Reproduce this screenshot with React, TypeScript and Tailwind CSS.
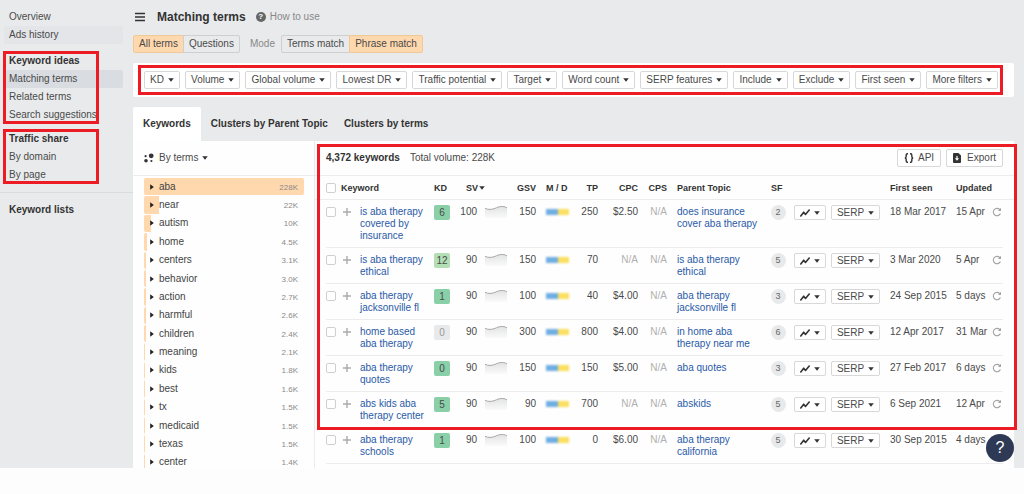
import clsx from "clsx";

const filters = [
  "KD",
  "Volume",
  "Global volume",
  "Lowest DR",
  "Traffic potential",
  "Target",
  "Word count",
  "SERP features",
  "Include",
  "Exclude",
  "First seen",
  "More filters",
];

const terms = [
  { name: "aba", label: "228K", volume: 228 },
  { name: "near", label: "22K", volume: 22 },
  { name: "autism", label: "10K", volume: 10 },
  { name: "home", label: "4.5K", volume: 4.5 },
  { name: "centers", label: "3.1K", volume: 3.1 },
  { name: "behavior", label: "3.0K", volume: 3 },
  { name: "action", label: "2.7K", volume: 2.7 },
  { name: "harmful", label: "2.6K", volume: 2.6 },
  { name: "children", label: "2.4K", volume: 2.4 },
  { name: "meaning", label: "2.1K", volume: 2.1 },
  { name: "kids", label: "1.8K", volume: 1.8 },
  { name: "best", label: "1.6K", volume: 1.6 },
  { name: "tx", label: "1.5K", volume: 1.5 },
  { name: "medicaid", label: "1.5K", volume: 1.5 },
  { name: "texas", label: "1.5K", volume: 1.5 },
  { name: "center", label: "1.4K", volume: 1.4 },
];

const keywords = [
  { keyword: "is aba therapy covered by insurance", kd: 6, level: "easy", sv: 100, gsv: 150, tp: 250, cpc: "$2.50", parent: "does insurance cover aba therapy", sf: 2, seen: "18 Mar 2017", updated: "15 Apr" },
  { keyword: "is aba therapy ethical", kd: 12, level: "medium", sv: 90, gsv: 150, tp: 70, cpc: "N/A", parent: "is aba therapy ethical", sf: 5, seen: "3 Mar 2020", updated: "5 Apr" },
  { keyword: "aba therapy jacksonville fl", kd: 1, level: "easy", sv: 90, gsv: 100, tp: 40, cpc: "$4.00", parent: "aba therapy jacksonville fl", sf: 3, seen: "24 Sep 2015", updated: "5 days" },
  { keyword: "home based aba therapy", kd: 0, level: "none", sv: 90, gsv: 300, tp: 800, cpc: "$4.00", parent: "in home aba therapy near me", sf: 6, seen: "12 Apr 2017", updated: "31 Mar" },
  { keyword: "aba therapy quotes", kd: 0, level: "easy", sv: 90, gsv: 150, tp: 150, cpc: "$5.00", parent: "aba quotes", sf: 3, seen: "27 Feb 2017", updated: "6 days" },
  { keyword: "abs kids aba therapy center", kd: 5, level: "easy", sv: 90, gsv: 90, tp: 700, cpc: "N/A", parent: "abskids", sf: 5, seen: "6 Sep 2021", updated: "12 Apr" },
  { keyword: "aba therapy schools", kd: 1, level: "easy", sv: 90, gsv: 100, tp: 0, cpc: "$6.00", parent: "aba therapy california", sf: 5, seen: "30 Sep 2015", updated: "4 days" },
];

const Caret = () => (
  <svg viewBox="0 0 6 4" className="h-1 w-1.5 shrink-0" fill="#333" aria-hidden="true">
    <path d="M0.2 0.2h5.6L3 3.8z" />
  </svg>
);

const TrendIcon = () => (
  <svg viewBox="0 0 10 8" className="h-2 w-2.5" fill="none" stroke="#333" strokeWidth="1.6" aria-hidden="true">
    <path d="M0.8 6.9L3.7 3.2L5.5 5.4L9.2 1" strokeLinejoin="round" strokeLinecap="round" />
  </svg>
);

const RefreshIcon = () => (
  <svg viewBox="0 0 10 10" className="h-2.5 w-2.5" fill="none" stroke="#a3a3a3" strokeWidth="1.1" aria-hidden="true">
    <path d="M8.4 6.6A3.7 3.7 0 1 1 7.7 2.5" />
    <path d="M9 0.8v3.1H5.9z" fill="#a3a3a3" stroke="none" />
  </svg>
);

const Sparkline = () => (
  <svg viewBox="0 0 22 14" className="h-3.5 w-[22px]" aria-hidden="true">
    <defs>
      <linearGradient id="spark" x1="0" y1="0" x2="0" y2="1">
        <stop offset="0" stopColor="#e2e3e4" />
        <stop offset="1" stopColor="#fafafa" />
      </linearGradient>
    </defs>
    <path d="M0 3.2C3 5 7 4.6 10 3.4C14 1.4 18 0.6 22 2.8V13H0z" fill="url(#spark)" />
    <path d="M0 3.2C3 5 7 4.6 10 3.4C14 1.4 18 0.6 22 2.8" fill="none" stroke="#a8a8a8" />
  </svg>
);

const Highlight = ({ className }: { className: string }) => (
  <div className={clsx("pointer-events-none absolute z-10 border-3 border-[#ed1c24]", className)} />
);

const SideLink = ({ label, active }: { label: string; active?: "soft" | "strong" }) => (
  <a
    href="#"
    className={clsx(
      "mr-2.5 ml-1 flex h-[18px] items-center rounded-xs px-[5px]",
      active === "soft" && "bg-[#e3e5e8]",
      active === "strong" && "bg-[#d9dce1]"
    )}
  >
    {label}
  </a>
);

const Sidebar = () => (
  <nav className="w-[133px] shrink-0 pt-2 whitespace-nowrap">
    <SideLink label="Overview" />
    <SideLink label="Ads history" active="soft" />
    <section className="relative mt-2">
      <Highlight className="-top-px right-[34px] bottom-0 left-[3px]" />
      <h2 className="flex h-[18px] items-center pl-[9px] font-bold text-[#333]">Keyword ideas</h2>
      <SideLink label="Matching terms" active="strong" />
      <SideLink label="Related terms" />
      <SideLink label="Search suggestions" />
    </section>
    <section className="relative mt-1.5">
      <Highlight className="-top-px right-[34px] bottom-0 left-[3px]" />
      <h2 className="flex h-[18px] items-center pl-[9px] font-bold text-[#333]">Traffic share</h2>
      <SideLink label="By domain" />
      <SideLink label="By page" />
    </section>
    <section className="mt-2 border-t border-[#d9dbde] pt-2">
      <h2 className="flex h-[18px] items-center pl-[9px] font-bold text-[#333]">Keyword lists</h2>
    </section>
  </nav>
);

const Segmented = ({ items, active }: { items: string[]; active: string }) => (
  <div className="flex h-[18px]">
    {items.map((item) => (
      <button
        key={item}
        className={clsx(
          "-ml-px border px-[5px] first:ml-0 first:rounded-l-xs last:rounded-r-xs",
          item === active ? "border-[#f0c998] bg-[#ffd8ae]" : "border-[#cdcfd2]"
        )}
      >
        {item}
      </button>
    ))}
  </div>
);

const TermsPanel = () => (
  <aside className="flex w-[182px] shrink-0 flex-col overflow-hidden border-r border-[#ececec]">
    <button className="flex h-[34px] shrink-0 items-center gap-1 pl-[11px]">
      <svg viewBox="0 0 10 10" className="h-2.5 w-2.5" fill="#333" aria-hidden="true">
        <circle cx="7.2" cy="2.8" r="2.4" />
        <circle cx="1.6" cy="3.2" r="1.1" />
        <circle cx="2" cy="7.8" r="1.8" />
        <circle cx="7.4" cy="8" r="1.1" />
      </svg>
      <span className="ml-px">By terms</span>
      <Caret />
    </button>
    <ul className="-mb-1 flex grow flex-col border-t border-[#ececec] pt-0.5 pr-2.5 pl-[11px]">
      {terms.map((term) => (
        <li key={term.name} className="flex-1 pb-px">
          <a href="#" className="relative flex h-full items-center overflow-hidden rounded-xs pr-1.5 pl-1.5">
            <span
              className="absolute inset-y-0 left-0 bg-[#ffd8ae]"
              style={{ width: `${(term.volume / 228) * 100}%` }}
            />
            <svg viewBox="0 0 4 6" className="relative h-1.5 w-1" fill="#222" aria-hidden="true">
              <path d="M0.2 0.2v5.6L3.8 3z" />
            </svg>
            <span className="relative ml-[5px] grow text-[#444]">{term.name}</span>
            <span className="relative pt-0.5 text-[8px] text-[#8a8a8a]">{term.label}</span>
          </a>
        </li>
      ))}
    </ul>
  </aside>
);

const tick =
  "block h-2.5 w-2.5 appearance-none rounded-[2px] border border-[#cfcfcf] bg-white checked:bg-[#2d5fae]";
const outlined = "flex items-center justify-center rounded-xs border border-[#d8d8d8] bg-white";
const cell = "border-b border-[#ececec] pt-1.5 pb-[5px]";
const tall = "border-b border-[#ececec] pt-[5px]";

const KeywordTable = () => (
  <table className="w-full table-fixed whitespace-nowrap">
    <colgroup>
      <col className="w-[11px]" />
      <col className="w-[15px]" />
      <col className="w-[19px]" />
      <col className="w-[74px]" />
      <col className="w-[18px]" />
      <col className="w-[25px]" />
      <col className="w-8" />
      <col className="w-[27px]" />
      <col className="w-[35px]" />
      <col className="w-[27px]" />
      <col className="w-10" />
      <col className="w-[29px]" />
      <col />
      <col className="w-[18px]" />
      <col className="w-[39px]" />
      <col className="w-[54px]" />
      <col className="w-[66px]" />
      <col className="w-[46px]" />
      <col className="w-[11px]" />
      <col className="w-[11px]" />
    </colgroup>
    <thead>
      <tr className="h-6 border-y border-[#ececec] text-left text-[9px] text-[#333]">
        <th />
        <th>
          <input type="checkbox" aria-label="Select all keywords" className={tick} />
        </th>
        <th colSpan={2}>Keyword</th>
        <th>KD</th>
        <th colSpan={2} className="pl-3.5">
          <span className="flex items-center gap-px">
            SV
            <Caret />
          </span>
        </th>
        <th className="text-right">GSV</th>
        <th className="pl-2.5">M / D</th>
        <th className="text-right">TP</th>
        <th className="text-right">CPC</th>
        <th className="text-right">CPS</th>
        <th className="pl-2.5">Parent Topic</th>
        <th className="pl-0.5">SF</th>
        <th colSpan={2} />
        <th className="pl-2.5">First seen</th>
        <th className="pl-2.5">Updated</th>
        <th colSpan={2} />
      </tr>
    </thead>
    <tbody className="align-top">
      {keywords.map((row) => (
        <tr key={row.keyword}>
          <td />
          <td className={cell}>
            <input type="checkbox" aria-label={row.keyword} className={clsx(tick, "mt-px")} />
          </td>
          <td className={cell}>
            <button aria-label="Add to list" className="mt-px ml-0.5 block">
              <svg viewBox="0 0 8 10" className="h-2.5 w-2" stroke="#aaa" strokeWidth="1.4" aria-hidden="true">
                <path d="M4 1v8M0 5h8" />
              </svg>
            </button>
          </td>
          <td className={clsx(cell, "pr-1 whitespace-normal")}>
            <a href="#" className="text-[#2a5aa7]">{row.keyword}</a>
          </td>
          <td className={tall}>
            <span
              className={clsx(
                "block w-4 rounded-[2px] text-center leading-[15px]",
                row.level === "easy" && "bg-[#89d0a8]",
                row.level === "medium" && "bg-[#b3dfb4]",
                row.level === "none" && "bg-[#e8e9ea] text-[#999]"
              )}
            >
              {row.kd}
            </span>
          </td>
          <td className={clsx(cell, "text-right")}>{row.sv}</td>
          <td className={clsx(tall, "pl-2")}>
            <Sparkline />
          </td>
          <td className={clsx(cell, "text-right")}>{row.gsv}</td>
          <td className={clsx(cell, "pl-2.5")}>
            <div className="mt-[3px] flex h-1.5 w-[23px] blur-[1px]">
              <span className="w-1/2 bg-[#6fade2]" />
              <span className="w-1/2 bg-[#fbdf5e]" />
            </div>
          </td>
          <td className={clsx(cell, "text-right")}>{row.tp}</td>
          <td className={clsx(cell, "text-right", row.cpc === "N/A" && "text-[#b0b0b0]")}>{row.cpc}</td>
          <td className={clsx(cell, "text-right text-[#b0b0b0]")}>N/A</td>
          <td className={clsx(cell, "pr-2 pl-2.5 whitespace-normal")}>
            <a href="#" className="text-[#2a5aa7]">{row.parent}</a>
          </td>
          <td className={tall}>
            <span className="mx-auto block w-[15px] rounded-full bg-[#e8e9ea] text-center text-[9px] leading-[15px] text-[#666]">
              {row.sf}
            </span>
          </td>
          <td className={clsx(tall, "pl-[7px]")}>
            <button aria-label="Trend" className={clsx(outlined, "h-[15px] w-8 gap-1")}>
              <TrendIcon />
              <Caret />
            </button>
          </td>
          <td className={clsx(tall, "pl-[5px]")}>
            <button className={clsx(outlined, "h-[15px] w-[49px] gap-1")}>
              SERP
              <Caret />
            </button>
          </td>
          <td className={clsx(cell, "pl-2.5")}>{row.seen}</td>
          <td className={clsx(cell, "pl-2.5")}>{row.updated}</td>
          <td className={cell}>
            <button aria-label="Refresh" className="mt-px block">
              <RefreshIcon />
            </button>
          </td>
          <td />
        </tr>
      ))}
    </tbody>
  </table>
);

const App = () => {
  return (
    <div className="min-h-screen bg-[#fdfdfd] font-['Liberation_Sans',Arial,sans-serif] text-[10px] leading-3 text-[#4a4a4a]">
      <div className="relative flex bg-[#e9eaec]">
        <Sidebar />
        <main className="min-w-0 grow pr-2.5">
          <header className="flex h-[33px] items-center">
            <button aria-label="Menu" className="ml-0.5">
              <svg viewBox="0 0 10 10" className="h-2.5 w-2.5" stroke="#333" strokeWidth="1.4" aria-hidden="true">
                <path d="M0 1.5h10M0 5h10M0 8.5h10" />
              </svg>
            </button>
            <h1 className="ml-3 text-xs font-bold text-[#333]">Matching terms</h1>
            <a href="#" className="ml-2.5 flex items-center gap-1 text-[#888]">
              <span className="flex h-2.5 w-2.5 items-center justify-center rounded-full bg-[#666] text-[8px] font-bold text-white">
                ?
              </span>
              How to use
            </a>
          </header>

          <div className="mt-0.5 flex items-center">
            <Segmented items={["All terms", "Questions"]} active="All terms" />
            <span className="mr-1.5 ml-2.5 text-[#888]">Mode</span>
            <Segmented items={["Terms match", "Phrase match"]} active="Phrase match" />
          </div>

          <div className="relative mt-2.5 flex gap-[5px] rounded-xs bg-white py-2 pr-4 pl-[11px] whitespace-nowrap">
            <Highlight className="inset-y-0.5 right-[11px] left-[5px]" />
            {filters.map((filter) => (
              <button key={filter} className={clsx(outlined, "h-[18px] flex-auto gap-1")}>
                {filter}
                <Caret />
              </button>
            ))}
          </div>

          <div role="tablist" className="mt-2.5 flex h-[34px] font-bold text-[#333]">
            <button role="tab" aria-selected="true" className="mr-0.5 rounded-t-xs bg-white px-2.5">
              Keywords
            </button>
            <button role="tab" className="px-2">
              Clusters by Parent Topic
            </button>
            <button role="tab" className="px-2">
              Clusters by terms
            </button>
          </div>

          <div className="flex bg-[#fefefe]">
            <TermsPanel />
            <section className="relative min-w-0 grow pb-1">
              <Highlight className="top-[3px] -right-[3px] bottom-[38px] left-0.5" />
              <div className="flex h-[34px] items-center pr-[11px] pl-[11px]">
                <strong className="text-[#333]">4,372 keywords</strong>
                <span className="ml-2.5 grow">Total volume: 228K</span>
                <button className={clsx(outlined, "mr-[5px] h-[18px] gap-1 px-1.5")}>
                  <svg viewBox="0 0 10 10" className="h-2.5 w-2.5" fill="none" stroke="#333" strokeWidth="1.4" aria-hidden="true">
                    <path d="M4 0.8H3.3Q2.2 0.8 2.2 2V3.6Q2.2 5 0.8 5Q2.2 5 2.2 6.4V8Q2.2 9.2 3.3 9.2H4" />
                    <path d="M6 0.8H6.7Q7.8 0.8 7.8 2V3.6Q7.8 5 9.2 5Q7.8 5 7.8 6.4V8Q7.8 9.2 6.7 9.2H6" />
                  </svg>
                  API
                </button>
                <button className={clsx(outlined, "h-[18px] gap-1.5 px-1.5")}>
                  <svg viewBox="0 0 8 10" className="h-2.5 w-2" aria-hidden="true">
                    <path d="M1 0h4.4L8 2.6V9a1 1 0 0 1-1 1H1a1 1 0 0 1-1-1V1a1 1 0 0 1 1-1z" fill="#333" />
                    <path d="M4 3v3" stroke="#fff" strokeWidth="1.2" />
                    <path d="M1.9 5.2h4.2L4 7.8z" fill="#fff" />
                  </svg>
                  Export
                </button>
              </div>
              <KeywordTable />
            </section>
          </div>
        </main>

        <button
          aria-label="Help"
          className="absolute right-2.5 bottom-1.5 z-20 flex h-7 w-7 items-center justify-center rounded-full bg-[#2e3a55] text-base text-white"
        >
          ?
        </button>
      </div>
    </div>
  );
};

export default App;
